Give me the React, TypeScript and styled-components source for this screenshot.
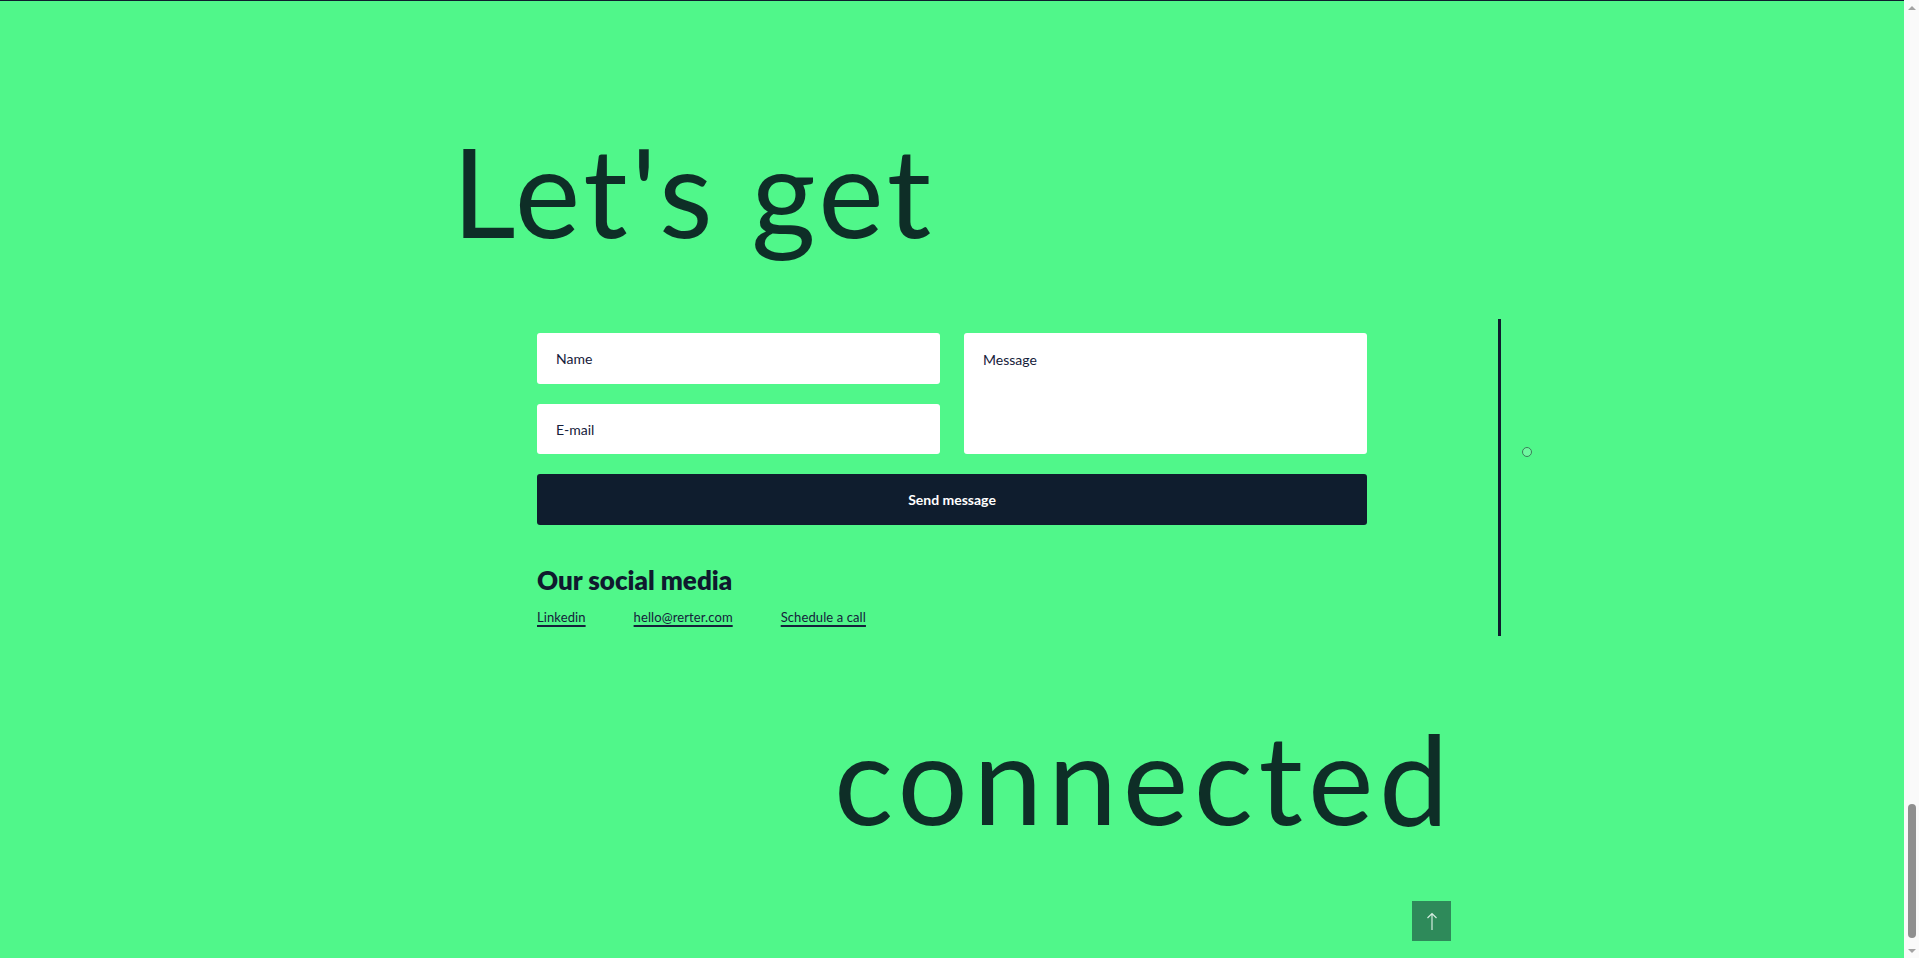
import React from 'react'
import styled, { createGlobalStyle } from 'styled-components'

const GlobalStyle = createGlobalStyle`
  body {
    margin: 0;
    font-family: Lato, 'Noto Sans', sans-serif;
    background: #50f78a;
  }
  * {
    box-sizing: border-box;
  }
`

const Shell = styled.div`
  display: flex;
  height: 100vh;
  overflow: hidden;
`

const Page = styled.section`
  flex: 1;
  min-width: 0;
  background: #50f78a;
  border-top: 1px solid #0f1d2e;
  padding-top: 127px;
`

const Container = styled.div`
  width: 992px;
  margin: 0 auto;
`

const BigTitle = styled.h1<{ $align?: 'left' | 'right'; $spacing?: number }>`
  margin: 0;
  font-family: Lato, sans-serif;
  font-weight: 400;
  font-size: 124px;
  line-height: 1;
  letter-spacing: ${(p) => p.$spacing ?? 3.5}px;
  color: #0e2e27;
  text-align: ${(p) => p.$align || 'left'};
`

const TopTitle = styled(BigTitle)`
  margin-left: -4px;
`

const MiddleRow = styled.div`
  display: grid;
  grid-template-columns: 1fr 830px 1fr;
  margin-top: 81px;
`

const FormColumn = styled.div`
  grid-column: 2;
`

const Form = styled.form`
  display: grid;
  grid-template-columns: 1fr 1fr;
  grid-template-rows: 51px 50px 51px;
  column-gap: 24px;
  row-gap: 20px;
`

const Field = styled.input`
  border: none;
  border-radius: 3px;
  background: #fff;
  padding: 0 19px;
  font-family: Lato, sans-serif;
  font-size: 14px;
  color: #15203a;
  outline: none;

  &::placeholder {
    color: #15203a;
    opacity: 1;
  }
`

const MessageField = styled.textarea`
  grid-column: 2;
  grid-row: 1 / span 2;
  border: none;
  border-radius: 3px;
  background: #fff;
  padding: 18px 19px;
  font-family: Lato, sans-serif;
  font-size: 14px;
  line-height: 18px;
  color: #15203a;
  resize: none;
  outline: none;

  &::placeholder {
    color: #15203a;
    opacity: 1;
  }
`

const SendButton = styled.button`
  grid-column: 1 / span 2;
  border: none;
  border-radius: 3px;
  background: #0f1d2e;
  color: #fff;
  font-family: Lato, sans-serif;
  font-weight: 700;
  font-size: 14px;
  cursor: pointer;
`

const SocialTitle = styled.h3`
  margin: 40px 0 0;
  font-family: Lato, sans-serif;
  font-weight: 800;
  font-size: 26px;
  line-height: 30px;
  color: #0f1a2e;
`

const LinkRow = styled.div`
  display: flex;
  gap: 48px;
  margin-top: 13px;
`

const SocialLink = styled.a`
  font-family: Lato, sans-serif;
  font-size: 13px;
  line-height: 18px;
  letter-spacing: 0.1px;
  color: #14213a;
  text-decoration: underline;
  text-decoration-thickness: 1.5px;
  text-underline-offset: 3px;
`

const Rail = styled.div`
  grid-column: 3;
  display: flex;
  align-items: flex-start;
  gap: 21px;
  padding-left: 131px;
  margin-top: -14px;
`

const RailLine = styled.div`
  width: 3px;
  height: 317px;
  background: #0f1d2e;
`

const RailDot = styled.span`
  width: 10px;
  height: 10px;
  margin-top: 128px;
  border-radius: 50%;
  border: 1px solid #3c7d5a;
  background: #6ef9a0;
`

const BottomTitle = styled(BigTitle)`
  margin-top: 79px;
  margin-right: -6px;
`

const Footer = styled.div`
  display: flex;
  justify-content: flex-end;
  margin-top: 62px;
  margin-right: -3px;
`

const UpButton = styled.button`
  width: 39px;
  height: 40px;
  border: none;
  padding: 0;
  background: #2e8a5a;
  display: flex;
  align-items: center;
  justify-content: center;
  cursor: pointer;
`

/* browser scrollbar as seen in the screenshot */
const ScrollTrack = styled.div`
  width: 15px;
  flex: none;
  background: #fafafa;
  display: flex;
  flex-direction: column;
  align-items: center;
`

const ScrollArrow = styled.span<{ $down?: boolean }>`
  width: 15px;
  height: 15px;
  flex: none;
  display: flex;
  align-items: center;
  justify-content: center;

  &::after {
    content: '';
    border-left: 4px solid transparent;
    border-right: 4px solid transparent;
    ${(p) =>
      p.$down ? 'border-top: 4px solid #a3a3a3;' : 'border-bottom: 4px solid #a3a3a3;'}
  }
`

const ScrollThumb = styled.span`
  width: 8px;
  height: 134px;
  margin-top: auto;
  margin-bottom: 5px;
  border-radius: 4px;
  background: #8f8f8f;
`

export default function App() {
  return (
    <>
      <GlobalStyle />
      <Shell>
        <Page>
          <Container>
            <TopTitle>Let's get</TopTitle>
          </Container>

          <MiddleRow>
            <FormColumn>
              <Form onSubmit={(e) => e.preventDefault()}>
                <Field type='text' placeholder='Name' />
                <MessageField placeholder='Message' />
                <Field type='email' placeholder='E-mail' />
                <SendButton type='submit'>Send message</SendButton>
              </Form>
              <SocialTitle>Our social media</SocialTitle>
              <LinkRow>
                <SocialLink href='#'>Linkedin</SocialLink>
                <SocialLink href='#'>hello@rerter.com</SocialLink>
                <SocialLink href='#'>Schedule a call</SocialLink>
              </LinkRow>
            </FormColumn>
            <Rail>
              <RailLine />
              <RailDot />
            </Rail>
          </MiddleRow>

          <Container>
            <BottomTitle $align='right' $spacing={5.5}>
              connected
            </BottomTitle>
            <Footer>
              <UpButton aria-label='Back to top'>
                <svg width='12' height='19' viewBox='0 0 12 19' fill='none'>
                  <path d='M6 18V1.5M1.5 6L6 1.5 10.5 6' stroke='#d4ecdf' strokeWidth='1.2' />
                </svg>
              </UpButton>
            </Footer>
          </Container>
        </Page>
        <ScrollTrack>
          <ScrollArrow />
          <ScrollThumb />
          <ScrollArrow $down />
        </ScrollTrack>
      </Shell>
    </>
  )
}
